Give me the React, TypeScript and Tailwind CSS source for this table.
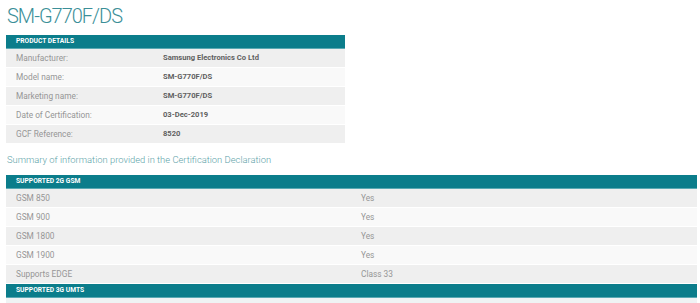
import React from "react";

const product = [
  ["Manufacturer:", "Samsung Electronics Co Ltd"],
  ["Model name:", "SM-G770F/DS"],
  ["Marketing name:", "SM-G770F/DS"],
  ["Date of Certification:", "03-Dec-2019"],
  ["GCF Reference:", "8520"],
];

const gsm = [
  ["GSM 850", "Yes"],
  ["GSM 900", "Yes"],
  ["GSM 1800", "Yes"],
  ["GSM 1900", "Yes"],
  ["Supports EDGE", "Class 33"],
];

function Header({ children }: { children: React.ReactNode }) {
  return (
    <div className="h-[14px] bg-[#0b7d8b] flex items-center pl-[10px] text-white font-bold text-[6.7px] border-b border-[#5aa9b3]">
      {children}
    </div>
  );
}

export default function App() {
  return (
    <div
      className="w-[700px] h-[303px] bg-white overflow-hidden"
      style={{ fontFamily: "Roboto, 'Liberation Sans', sans-serif" }}
    >
      <div className="pl-[6px] pt-[3px]">
        <h1 className="text-[20px] leading-[26px] font-light text-[#3b8f98] pl-[1px] tracking-[-1px]">
          SM-G770F/DS
        </h1>
        <div className="w-[339px] mt-[6px]">
          <Header>PRODUCT DETAILS</Header>
          {product.map(([k, v], i) => (
            <div
              key={k}
              className={`h-[19px] flex items-center border-b border-white ${
                i % 2 === 0 ? "bg-[#efefef]" : "bg-[#f9f9f9]"
              }`}
            >
              <div className="w-[157px] pl-[10px] text-[8.3px] text-[#969696]">{k}</div>
              <div className="text-[7.6px] font-bold text-[#5f5f5f]">{v}</div>
            </div>
          ))}
        </div>
        <div className="mt-[10px] text-[9.4px] font-light text-[#5c9fa8] pl-[1px] leading-[12px]">
          Summary of information provided in the Certification Declaration
        </div>
        <div className="w-[691px] mt-[9px]">
          <Header>SUPPORTED 2G GSM</Header>
          {gsm.map(([k, v], i) => (
            <div
              key={k}
              className={`h-[19px] flex items-center border-b border-white ${
                i % 2 === 0 ? "bg-[#efefef]" : "bg-[#f9f9f9]"
              }`}
            >
              <div className="w-[355px] pl-[10px] text-[8.3px] text-[#969696]">{k}</div>
              <div className="text-[8.3px] text-[#969696]">{v}</div>
            </div>
          ))}
          <Header>SUPPORTED 3G UMTS</Header>
          <div className="h-[19px] bg-[#eff3f4]" />
        </div>
      </div>
    </div>
  );
}
